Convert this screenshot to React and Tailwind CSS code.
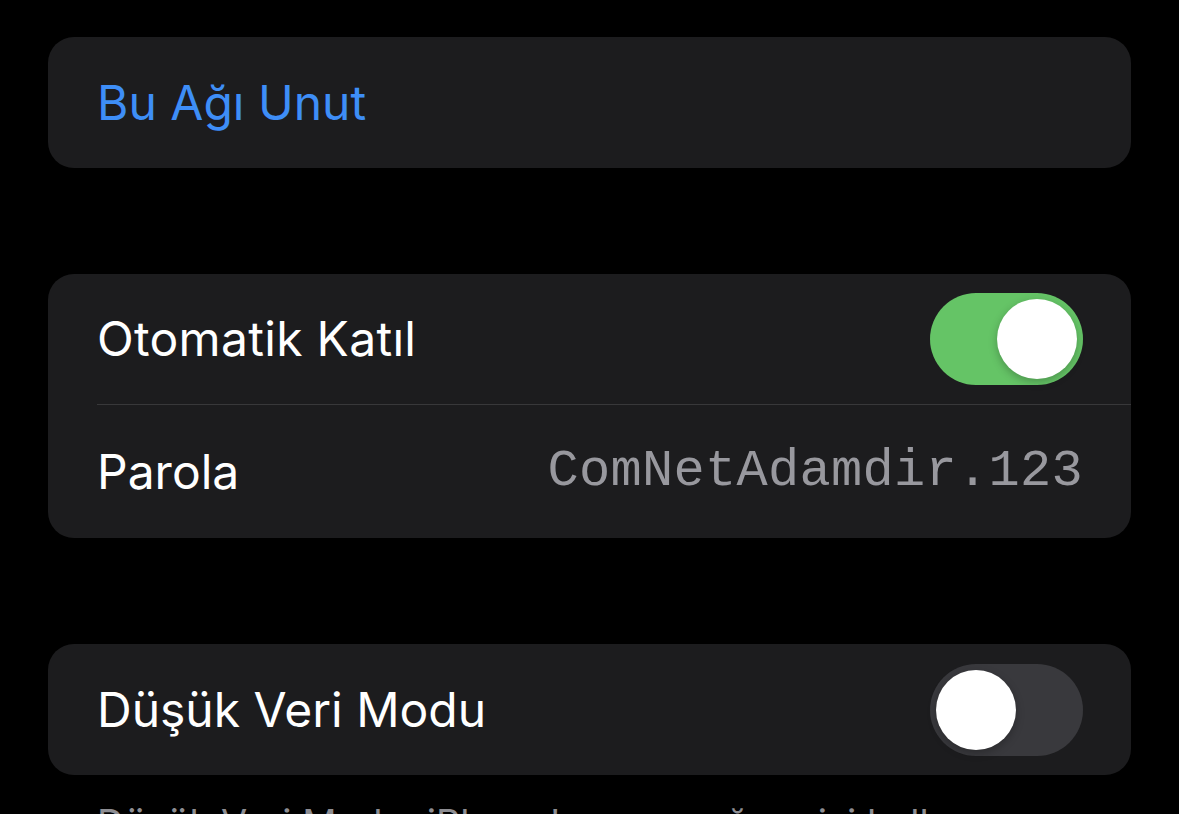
import React from 'react';

function Toggle({ on }) {
    return (
        <div
            className={`w-[153px] h-[92px] rounded-full p-[6px] flex items-center ${on ? 'bg-[#65c466] justify-end' : 'bg-[#39393d] justify-start'}`}
        >
            <div className="w-[80px] h-[80px] rounded-full bg-white shadow-[0_3px_8px_rgba(0,0,0,0.25)]" />
        </div>
    );
}

function Row({ children, border, tall }) {
    return (
        <div className="pl-[49px]">
            <div className={`${tall ? 'h-[133px]' : 'h-[131px]'} pr-[48px] flex items-center justify-between ${border ? 'border-b border-[#38383a]' : ''}`}>
                {children}
            </div>
        </div>
    );
}

export default function App() {
    return (
        <div
            className="h-[814px] overflow-hidden bg-black px-[48px] pt-[37px] text-white"
            style={{ fontFamily: 'Inter, "Noto Sans", sans-serif' }}
        >
            <div className="bg-[#1c1c1e] rounded-[26px]">
                <Row>
                    <span className="text-[48px] text-[#3e8ef7]">Bu Ağı Unut</span>
                </Row>
            </div>

            <div className="bg-[#1c1c1e] rounded-[26px] mt-[106px]">
                <Row border>
                    <span className="text-[48px] tracking-[0.3px]">Otomatik Katıl</span>
                    <Toggle on />
                </Row>
                <Row tall>
                    <span className="text-[48px]">Parola</span>
                    <span
                        className="text-[52px] text-[#98989e] tracking-[0.3px]"
                        style={{ fontFamily: '"Liberation Mono", monospace' }}
                    >
                        ComNetAdamdir.123
                    </span>
                </Row>
            </div>

            <div className="bg-[#1c1c1e] rounded-[26px] mt-[106px]">
                <Row>
                    <span className="text-[48px]">Düşük Veri Modu</span>
                    <Toggle />
                </Row>
            </div>

            <p className="mt-[24px] px-[49px] text-[38px] leading-[48px] text-[#8e8e93]">
                Düşük Veri Modu, iPhone'unuzun ağ verisi kullanımını azaltmasına yardımcı olur.
            </p>
        </div>
    );
}
